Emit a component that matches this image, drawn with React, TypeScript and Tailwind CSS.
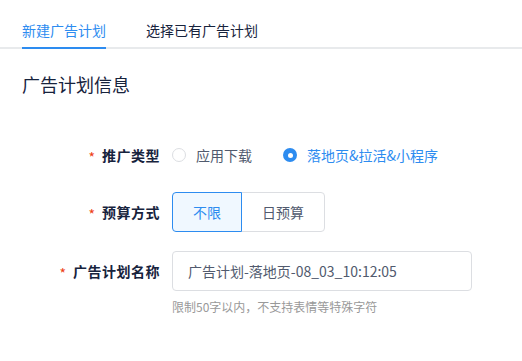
import { useState } from "react";

const Label = ({ text }: { text: string }) => (
  <div className="w-[160px] flex justify-end items-center shrink-0">
    <span className="text-[#ed4014] text-[14px] mr-[7px] leading-none relative top-[2px]">*</span>
    <span className="text-[14px] font-bold text-[#17233d] tracking-[0.5px]">{text}</span>
  </div>
);

const Radio = ({
  checked,
  label,
  onClick,
}: {
  checked: boolean;
  label: string;
  onClick: () => void;
}) => (
  <button onClick={onClick} className="flex items-center gap-[10px]">
    {checked ? (
      <span className="w-[14px] h-[14px] rounded-full bg-[#2d8cf0] flex items-center justify-center">
        <span className="w-[5px] h-[5px] rounded-full bg-white" />
      </span>
    ) : (
      <span className="w-[14px] h-[14px] rounded-full border border-[#dcdee2] bg-white" />
    )}
    <span className={`text-[14px] ${checked ? "text-[#2d8cf0]" : "text-[#515a6e]"}`}>
      {label}
    </span>
  </button>
);

export default function App() {
  const [tab, setTab] = useState(0);
  const [type, setType] = useState("landing");
  const [budget, setBudget] = useState("none");

  return (
    <div
      className="w-[522px] h-[361px] bg-white text-[#515a6e]"
      style={{ fontFamily: '"Noto Sans CJK SC", "Noto Sans", sans-serif' }}
    >
      {/* Tabs */}
      <div className="flex gap-10 pl-[22px] border-b-2 border-[#e8eaec]">
        {["新建广告计划", "选择已有广告计划"].map((t, i) => (
          <button
            key={t}
            onClick={() => setTab(i)}
            className={`pt-5 pb-[7px] leading-5 text-[14px] -mb-[2px] border-b-2 ${
              tab === i
                ? "text-[#2d8cf0] border-[#2d8cf0]"
                : "text-[#17233d] border-transparent"
            }`}
          >
            {t}
          </button>
        ))}
      </div>

      <h2 className="mt-[23px] pl-[22px] text-[18px] leading-6 text-[#17233d]">
        广告计划信息
      </h2>

      {/* 推广类型 */}
      <div className="mt-[39px] h-10 flex items-center">
        <Label text="推广类型" />
        <div className="ml-3 flex items-center gap-[31px]">
          <Radio checked={type === "app"} label="应用下载" onClick={() => setType("app")} />
          <Radio
            checked={type === "landing"}
            label="落地页&拉活&小程序"
            onClick={() => setType("landing")}
          />
        </div>
      </div>

      {/* 预算方式 */}
      <div className="mt-[17px] h-10 flex items-center">
        <Label text="预算方式" />
        <div className="ml-3 flex h-10">
          <button
            onClick={() => setBudget("none")}
            className={`w-[70px] h-10 text-[14px] rounded-l-[4px] border ${
              budget === "none"
                ? "border-[#2d8cf0] bg-[#f0f8ff] text-[#2d8cf0] z-10"
                : "border-[#dcdee2] text-[#515a6e]"
            }`}
          >
            不限
          </button>
          <button
            onClick={() => setBudget("daily")}
            className={`w-[84px] h-10 -ml-px text-[14px] rounded-r-[4px] border ${
              budget === "daily"
                ? "border-[#2d8cf0] bg-[#f0f8ff] text-[#2d8cf0] z-10"
                : "border-[#dcdee2] text-[#515a6e]"
            }`}
          >
            日预算
          </button>
        </div>
      </div>

      {/* 广告计划名称 */}
      <div className="mt-[19px] h-10 flex items-center">
        <Label text="广告计划名称" />
        <input
          defaultValue="广告计划-落地页-08_03_10:12:05"
          className="ml-3 w-[300px] h-10 px-[15px] text-[14px] text-[#515a6e] border border-[#dcdee2] rounded-[4px] outline-none"
        />
      </div>
      <p className="mt-2 ml-[172px] text-[12px] leading-4 text-[#999]">
        限制50字以内，不支持表情等特殊字符
      </p>
    </div>
  );
}
